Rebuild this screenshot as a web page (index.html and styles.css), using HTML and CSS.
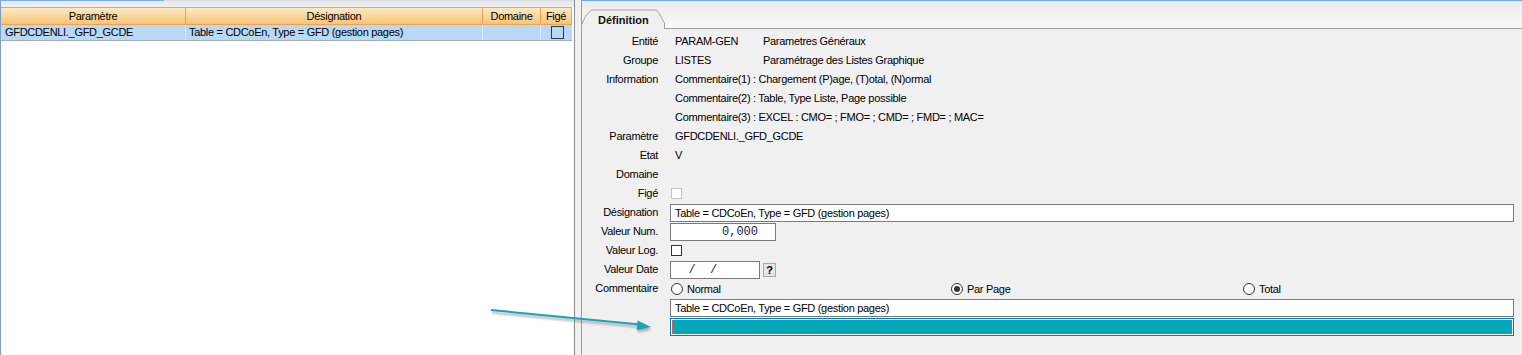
FILE: index.html
```html
<!DOCTYPE html>
<html lang="fr">
<head>
<meta charset="utf-8">
<title>Paramètres</title>
<link rel="stylesheet" href="styles.css">
</head>
<body>
<div class="app">
  <section class="left">
    <div class="left-top"></div>
    <div class="grid-head">
      <div class="hc c1">Paramètre</div>
      <div class="hc c2">Désignation</div>
      <div class="hc c3">Domaine</div>
      <div class="hc c4">Figé</div>
    </div>
    <div class="grid-row">
      <div class="rc c1">GFDCDENLI._GFD_GCDE</div>
      <div class="rc c2">Table = CDCoEn, Type = GFD (gestion pages)</div>
      <div class="rc c3"></div>
      <div class="rc c4"><span class="gbox"></span></div>
    </div>
  </section>
  <div class="splitter"></div>
  <section class="right">
    <div class="tabbar">
      <div class="tab">
        <svg class="tab-shape" width="84" height="20" viewBox="0 0 84 20"><path d="M0.5 20 L0.5 16 Q4 6 9 2 Q10.5 1 12 1 L74 1 Q76 1 77.5 3.5 L83.5 14 L83.5 20" fill="#f0f0f0" stroke="#a2a2a2" stroke-width="1"/></svg>
        <span class="tab-label">Définition</span>
      </div>
    </div>
    <div class="form">
      <div class="lbl">Entité</div>
      <div class="val pair"><span class="k">PARAM-GEN</span><span>Parametres Généraux</span></div>

      <div class="lbl">Groupe</div>
      <div class="val pair"><span class="k">LISTES</span><span>Paramétrage des Listes Graphique</span></div>

      <div class="lbl">Information</div>
      <div class="val">Commentaire(1) : Chargement (P)age, (T)otal, (N)ormal</div>

      <div class="lbl"></div>
      <div class="val">Commentaire(2) : Table, Type Liste, Page possible</div>

      <div class="lbl"></div>
      <div class="val">Commentaire(3) : EXCEL : CMO= ; FMO= ; CMD= ; FMD= ; MAC=</div>

      <div class="lbl">Paramètre</div>
      <div class="val">GFDCDENLI._GFD_GCDE</div>

      <div class="lbl">Etat</div>
      <div class="val">V</div>

      <div class="lbl">Domaine</div>
      <div class="val"></div>

      <div class="lbl">Figé</div>
      <div class="cell"><span class="chk disabled"></span></div>

      <div class="lbl">Désignation</div>
      <div class="cell"><div class="field wide">Table = CDCoEn, Type = GFD (gestion pages)</div></div>

      <div class="lbl">Valeur Num.</div>
      <div class="cell"><div class="field num">0,000</div></div>

      <div class="lbl">Valeur Log.</div>
      <div class="cell"><span class="chk"></span></div>

      <div class="lbl">Valeur Date</div>
      <div class="cell date-row"><div class="field date">  /  /</div><span class="qbtn">?</span></div>

      <div class="lbl">Commentaire</div>
      <div class="cell radios">
        <label class="radio"><span class="dot"></span>Normal</label>
        <label class="radio"><span class="dot on"></span>Par Page</label>
        <label class="radio"><span class="dot"></span>Total</label>
      </div>

      <div class="lbl"></div>
      <div class="cell"><div class="field wide">Table = CDCoEn, Type = GFD (gestion pages)</div></div>

      <div class="lbl"></div>
      <div class="cell"><div class="teal"><div class="teal-in"></div></div></div>
    </div>
  </section>
</div>
<svg class="arrow" width="1522" height="355" viewBox="0 0 1522 355">
  <defs>
    <filter id="sh" x="-10%" y="-50%" width="120%" height="200%"><feGaussianBlur stdDeviation="1.2"/></filter>
  </defs>
  <g filter="url(#sh)" opacity="0.45" transform="translate(1 2.5)">
    <line x1="491" y1="310" x2="640" y2="324.5" stroke="#555" stroke-width="2.2"/>
    <polygon points="651,327 637.6,320.6 636.6,330" fill="#555"/>
  </g>
  <line x1="491" y1="310" x2="640" y2="324.5" stroke="#1aa3b4" stroke-width="2"/>
  <polygon points="651,327 637.6,320.6 636.6,330" fill="#1aa3b4"/>
</svg>
</body>
</html>
```

FILE: styles.css
```css
html, body {
  margin: 0;
  padding: 0;
}
body {
  width: 1522px;
  height: 355px;
  overflow: hidden;
  position: relative;
  font-family: "Liberation Sans", Arial, sans-serif;
  font-size: 11px;
  letter-spacing: -0.3px;
  color: #000;
  background: #f0f0f0;
}
.app {
  display: flex;
  height: 355px;
}

/* ---------- left grid ---------- */
.left {
  width: 575px;
  flex: none;
  box-sizing: border-box;
  border-left: 1px solid #7ea0c8;
  border-right: 1px solid #8a8a8a;
  background: #fff;
  display: flex;
  flex-direction: column;
}
.left-top {
  height: 7px;
  background:
    linear-gradient(to right, #7db0ee 0, #7db0ee 163px, #d6dce4 163px) top left / 100% 1px no-repeat,
    linear-gradient(#e6e6e6, #f0f0f0);
}
.grid-head {
  display: flex;
  width: 571px;
  height: 18px;
  box-sizing: border-box;
  border-top: 1px solid #f4a14a;
  border-bottom: 1px solid #f4a14a;
  background: linear-gradient(#fde9c2, #f6c47a);
}
.hc {
  box-sizing: border-box;
  border-right: 1px solid #f4a14a;
  text-align: center;
  line-height: 16px;
  white-space: nowrap;
}
.c1 { width: 185px; }
.c2 { width: 297px; }
.c3 { width: 58px; }
.c4 { width: 31px; }
.grid-row {
  display: flex;
  width: 571px;
  height: 16px;
  box-sizing: border-box;
  background: #b8d8f3;
  border-bottom: 1px solid #a3abb3;
}
.rc {
  box-sizing: border-box;
  border-right: 1px dotted #fff;
  line-height: 15px;
  padding-left: 4px;
  white-space: nowrap;
  overflow: hidden;
}
.grid-row .c2 { padding-left: 3px; }
.grid-row .c4 {
  display: flex;
  align-items: center;
  justify-content: center;
  padding-left: 2px;
  border-right: none;
}
.gbox {
  width: 13px;
  height: 13px;
  box-sizing: border-box;
  border: 1px solid #1f3b57;
}

/* ---------- splitter ---------- */
.splitter {
  width: 7px;
  flex: none;
  box-sizing: border-box;
  background: #f0f0f0;
  border-right: 1px solid #9a9a9a;
}

/* ---------- right panel ---------- */
.right {
  flex: 1;
  display: flex;
  flex-direction: column;
  background: #f0f0f0;
}
.tabbar {
  height: 29px;
  box-sizing: border-box;
  border-top: 1px solid #6ea8f2;
  border-bottom: 1px solid #a0a0a0;
  background: linear-gradient(#ececec, #f8f8f8);
  display: flex;
  align-items: flex-end;
}
.tab {
  position: relative;
  width: 84px;
  height: 20px;
  margin-left: -1px;
  margin-bottom: -1px;
}
.tab-shape {
  position: absolute;
  left: 0;
  top: 0;
}
.tab-label {
  position: relative;
  display: block;
  padding-left: 17px;
  padding-top: 4px;
  line-height: 14px;
  font-weight: bold;
  letter-spacing: 0;
  color: #111;
}
.form {
  display: grid;
  grid-template-columns: 76px 1fr;
  column-gap: 12px;
  grid-auto-rows: 19px;
  align-items: center;
  padding-top: 3px;
  padding-right: 8px;
}
.lbl {
  text-align: right;
  white-space: nowrap;
  line-height: 19px;
}
.val {
  padding-left: 5px;
  white-space: nowrap;
  line-height: 19px;
}
.pair {
  display: flex;
}
.pair .k {
  width: 88px;
}
.cell {
  display: flex;
  align-items: center;
  height: 19px;
}
.chk {
  width: 11px;
  height: 11px;
  box-sizing: border-box;
  margin-left: 1px;
  border: 1px solid #333;
  background: #fff;
}
.chk.disabled {
  border-color: #c4c4c4;
}
.field {
  height: 18px;
  box-sizing: border-box;
  background: #fff;
  border: 1px solid #7a7a7a;
  padding-left: 4px;
  line-height: 16px;
  white-space: pre;
  overflow: hidden;
}
.field.wide {
  flex: 1;
}
.field.num {
  width: 106px;
  text-align: right;
  padding-right: 17px;
  font-family: "Liberation Mono", "Courier New", monospace;
  font-size: 12px;
  letter-spacing: 0;
  color: #1c1c3c;
}
.date-row {
  gap: 3px;
}
.field.date {
  width: 90px;
  padding-left: 3px;
  font-family: "Liberation Mono", "Courier New", monospace;
  font-size: 12px;
  letter-spacing: 0;
  color: #1c1c3c;
}
.qbtn {
  width: 13px;
  height: 14px;
  box-sizing: border-box;
  border: 1px solid #a8a8a8;
  background: #e6e6e6;
  font-weight: bold;
  font-size: 11px;
  line-height: 12px;
  text-align: center;
  letter-spacing: 0;
}
.radios {
  display: grid;
  grid-template-columns: 280px 292px 1fr;
}
.radio {
  display: flex;
  align-items: center;
  gap: 4px;
  padding-left: 1px;
}
.dot {
  width: 12px;
  height: 12px;
  box-sizing: border-box;
  border: 1px solid #333;
  border-radius: 50%;
  background: #fff;
  display: flex;
  align-items: center;
  justify-content: center;
}
.dot.on::after {
  content: "";
  width: 6px;
  height: 6px;
  border-radius: 50%;
  background: #333;
}
.teal {
  flex: 1;
  height: 18px;
  box-sizing: border-box;
  border: 1px solid #0a78d2;
  padding: 1px;
  background: #fff;
}
.teal-in {
  height: 100%;
  box-sizing: border-box;
  background: #00a8b7;
  border-left: 1px solid #d9603b;
}

/* ---------- annotation arrow ---------- */
.arrow {
  position: absolute;
  left: 0;
  top: 0;
  pointer-events: none;
}
```
